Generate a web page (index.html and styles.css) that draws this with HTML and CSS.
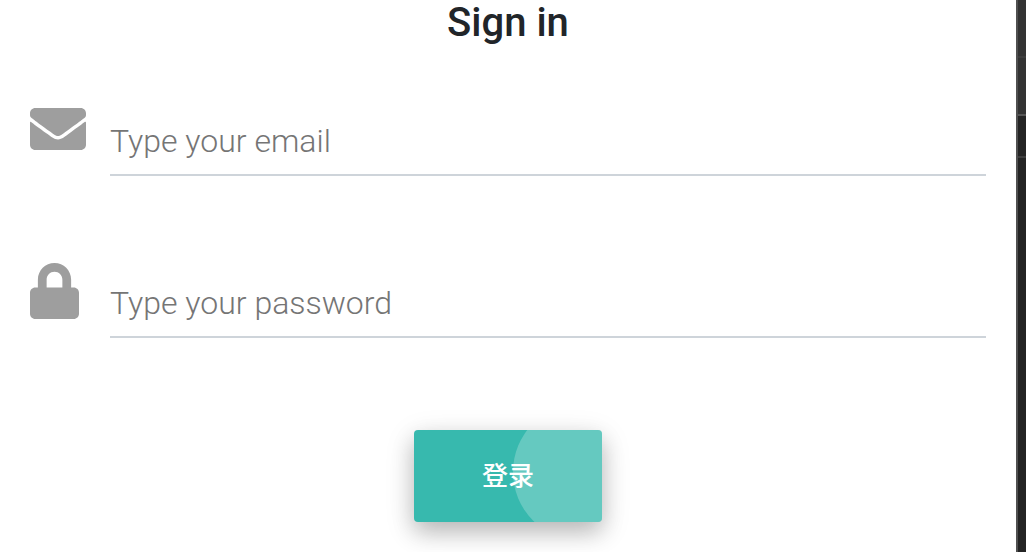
FILE: index.html
```html
<!DOCTYPE html>
<html lang="en">

<head>
    <meta charset="UTF-8">
    <meta name="viewport" content="width=device-width, initial-scale=1.0">
    <title>Sign in</title>
    <link rel="stylesheet" href="styles.css">
</head>

<body>
    <form class="login">
        <h3 class="title">Sign in</h3>

        <div class="md-form">
            <svg class="prefix" viewBox="0 0 512 512" width="56" height="56"><path d="M502.3 190.8c3.9-3.1 9.7-.2 9.7 4.7V400c0 26.5-21.5 48-48 48H48c-26.5 0-48-21.5-48-48V195.6c0-5 5.7-7.8 9.7-4.7 22.4 17.4 52.1 39.5 154.1 113.6 21.1 15.4 56.7 47.8 92.2 47.6 35.7.3 72-32.8 92.3-47.6 102-74.1 131.6-96.3 154-113.7zM256 320c23.2.4 56.6-29.2 73.4-41.4 132.7-96.3 142.8-104.7 173.4-128.7 5.8-4.5 9.2-11.5 9.2-18.9v-19c0-26.5-21.5-48-48-48H48c-26.5 0-48 21.5-48 48v19c0 7.4 3.4 14.3 9.2 18.9 30.6 23.9 40.7 32.4 173.4 128.7 16.8 12.2 50.2 41.8 73.4 41.4z"/></svg>
            <input type="email" placeholder="Type your email">
        </div>

        <div class="md-form">
            <svg class="prefix lock" viewBox="0 0 448 512" width="49" height="56"><path d="M400 224h-24v-72C376 68.2 307.8 0 224 0S72 68.2 72 152v72H48c-26.5 0-48 21.5-48 48v192c0 26.5 21.5 48 48 48h352c26.5 0 48-21.5 48-48V272c0-26.5-21.5-48-48-48zm-104 0H152v-72c0-39.7 32.3-72 72-72s72 32.3 72 72v72z"/></svg>
            <input type="password" placeholder="Type your password">
        </div>

        <button type="button" class="btn">登录<span class="ripple"></span></button>
    </form>

    <div class="devtools">
        <div class="toolbar"></div>
        <div class="tabs"></div>
        <div class="filter"></div>
        <div class="panel"></div>
    </div>
</body>

</html>
```
FILE: styles.css
```css
*{
    margin: 0;
    padding: 0;
    box-sizing: border-box;
}
body{
    height: 100vh;
    display: flex;
    overflow: hidden;
    background: #fff;
    font-family: Roboto, "Noto Sans CJK SC", sans-serif;
}
.login{
    flex: 1;
    display: flex;
    flex-direction: column;
    align-items: center;
    padding: 0 30px;
}
.title{
    height: 101px;
    line-height: 46px;
    font-size: 40px;
    font-weight: 500;
    color: #212529;
}
.md-form{
    width: 100%;
    height: 162px;
    display: flex;
    align-items: flex-start;
}
.prefix{
    flex: none;
    fill: #9e9e9e;
}
.lock{
    margin-right: 7px;
}
.md-form input{
    flex: 1;
    height: 70px;
    margin: 5px 0 0 24px;
    padding-top: 2px;
    border: 0;
    border-bottom: 2px solid #ced4da;
    outline: 0;
    background: transparent;
    font-family: inherit;
    font-size: 32px;
    font-weight: 300;
}
.md-form input::placeholder{
    color: #757575;
}
.btn{
    position: relative;
    overflow: hidden;
    width: 188px;
    height: 92px;
    margin-top: 5px;
    padding-bottom: 5px;
    border: 0;
    border-radius: 4px;
    background: #37b9ae;
    box-shadow: 0 10px 22px rgba(0, 0, 0, .18), 0 8px 30px rgba(0, 0, 0, .15);
    color: #fff;
    font-family: inherit;
    font-size: 26px;
    font-weight: 500;
}
/* click wave, clipped by the button */
.ripple{
    position: absolute;
    left: 99px;
    top: -27px;
    width: 138px;
    height: 138px;
    border-radius: 50%;
    background: rgba(255, 255, 255, .23);
}
.devtools{
    width: 10px;
    display: flex;
    flex-direction: column;
    border-left: 2px solid #505050;
    background: #242424;
}
.toolbar{
    height: 58px;
    background: #333;
    border-bottom: 2px solid #3d3d3d;
}
.tabs{
    height: 58px;
    background: #333;
    border-bottom: 2px solid #555;
}
.filter{
    height: 42px;
    border-bottom: 2px solid #3d3d3d;
}
.panel{
    flex: 1;
}
```
